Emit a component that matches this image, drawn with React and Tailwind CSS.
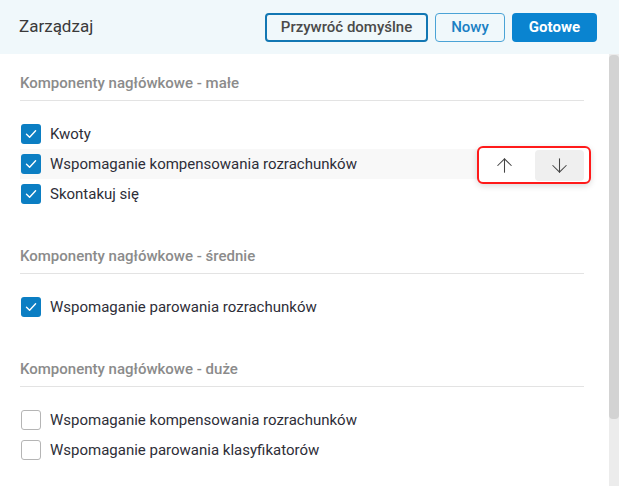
import React from 'react';
import { ArrowUp, ArrowDown } from 'lucide-react';

const sections = [
    {
        title: 'Komponenty nagłówkowe - małe',
        items: [
            { label: 'Kwoty', checked: true },
            { label: 'Wspomaganie kompensowania rozrachunków', checked: true, active: true },
            { label: 'Skontakuj się', checked: true },
        ],
    },
    {
        title: 'Komponenty nagłówkowe - średnie',
        items: [{ label: 'Wspomaganie parowania rozrachunków', checked: true }],
    },
    {
        title: 'Komponenty nagłówkowe - duże',
        items: [
            { label: 'Wspomaganie kompensowania rozrachunków', checked: false },
            { label: 'Wspomaganie parowania klasyfikatorów', checked: false },
        ],
    },
];

const Checkbox = ({ checked }) =>
    checked ? (
        <span className="w-[20px] h-[20px] rounded-[3px] bg-[#0b7ec3] flex items-center justify-center shrink-0">
            <svg width="14" height="14" viewBox="0 0 14 14" fill="none">
                <path d="M2.5 7.2 L5.6 10.2 L11.6 3.8" stroke="white" strokeWidth="1.4" strokeLinecap="round" strokeLinejoin="round" />
            </svg>
        </span>
    ) : (
        <span className="w-[20px] h-[20px] rounded-[3px] border border-[#b5b5b5] bg-white shrink-0" />
    );

const Row = ({ label, checked, active }) => (
    <div className={`relative h-[30px] flex items-center gap-[9px] pl-[1px] ${active ? 'bg-[#f8f8f8]' : ''}`}>
        <Checkbox checked={checked} />
        <span className="text-[15px] text-[#2e2e38]">{label}</span>
        {active && (
            <div className="absolute right-[-7px] top-[-3px] w-[114px] h-[38px] rounded-[6px] border-2 border-[#ff1a1a] bg-white shadow-[0_2px_6px_rgba(0,0,0,0.15)] flex items-center gap-[2px] pl-[3px] pr-[5px]">
                <button className="flex-1 h-[31px] rounded-[4px] flex items-center justify-center pr-[6px] text-[#444]">
                    <ArrowUp size={23} strokeWidth={1.1} />
                </button>
                <button className="w-[49px] h-[31px] rounded-[4px] bg-[#efefef] flex items-center justify-center text-[#444]">
                    <ArrowDown size={23} strokeWidth={1.1} />
                </button>
            </div>
        )}
    </div>
);

const App = () => {
    return (
        <div className="w-[619px] h-[486px] overflow-hidden bg-white flex flex-col font-['Roboto',sans-serif]">
            <div className="h-[54px] shrink-0 bg-[#f0f8fb] flex items-center justify-between pl-[19px] pr-[22px]">
                <h1 className="text-[17px] text-[#3a3a3a]">Zarządzaj</h1>
                <div className="flex items-center gap-[7px] pt-[1px]">
                    <button className="h-[29px] px-[14px] rounded-[4px] border-2 border-[#1277b3] text-[15px] font-medium text-[#4a4a4a]">
                        Przywróć domyślne
                    </button>
                    <button className="h-[29px] px-[15px] rounded-[4px] border border-[#4aa3d6] text-[15px] font-medium text-[#1a80c4]">
                        Nowy
                    </button>
                    <button className="h-[29px] px-[17px] rounded-[4px] bg-[#0a84d0] text-[15px] font-bold text-white">
                        Gotowe
                    </button>
                </div>
            </div>
            <div className="flex flex-1 min-h-0">
                <div className="flex-1 pl-[20px] pr-[25px] pt-[19px]">
                    {sections.map((s, i) => (
                        <div key={i} className={i > 0 ? 'mt-[37px]' : ''}>
                            <h2 className="text-[15px] leading-[20px] font-medium text-[#8b8b8b]">{s.title}</h2>
                            <div className="h-px bg-[#e3e3e3] mt-[7px] mb-[18px]" />
                            {s.items.map((it, j) => (
                                <Row key={j} {...it} />
                            ))}
                        </div>
                    ))}
                </div>
                <div className="w-[10px] bg-[#ececec] flex flex-col">
                    <div className="h-[364px] mt-[1px] rounded-[4px] bg-[#d3d3d3]" />
                </div>
            </div>
        </div>
    );
};

export default App;
